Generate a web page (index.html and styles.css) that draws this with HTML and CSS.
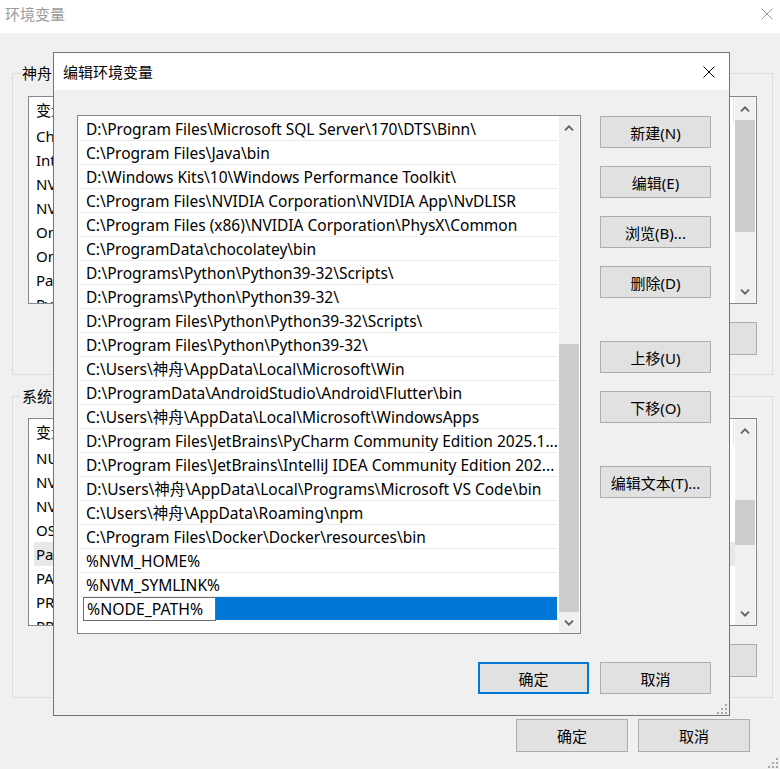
FILE: index.html
```html
<!DOCTYPE html>
<html lang="zh-CN">
<head>
<meta charset="utf-8">
<title>编辑环境变量</title>
<link rel="stylesheet" href="styles.css">
</head>
<body>
<div class="win">
  <div class="win-title">
    <span class="win-title-text">环境变量</span>
    <svg class="x-icon" width="12" height="12" viewBox="0 0 12 12"><path d="M0.5 0.5 L11.5 11.5 M11.5 0.5 L0.5 11.5" stroke="#9a9a9a" stroke-width="1" fill="none"/></svg>
  </div>
  <div class="win-body">
    <div class="group">
      <div class="group-label">神舟 的用户变量(U)</div>
      <div class="blv">
        <div class="blv-main">
          <div class="blv-head"><span>变量</span></div>
          <div class="blv-row">ChocolateyLastPathUpdate</div>
          <div class="blv-row">IntelliJ IDEA Community Edition</div>
          <div class="blv-row">NVM_HOME</div>
          <div class="blv-row">NVM_SYMLINK</div>
          <div class="blv-row">OneDrive</div>
          <div class="blv-row">OneDriveConsumer</div>
          <div class="blv-row">Path</div>
          <div class="blv-row">PyCharm Community Edition</div>
        </div>
        <div class="sb">
          <div class="sb-btn"><svg width="10" height="6" viewBox="0 0 10 6"><polyline points="1,5.3 5,1.3 9,5.3" fill="none" stroke="#606060" stroke-width="1.8"/></svg></div>
          <div class="sb-track"><div class="sb-thumb thumb-user"></div></div>
          <div class="sb-btn"><svg width="10" height="6" viewBox="0 0 10 6"><polyline points="1,0.7 5,4.7 9,0.7" fill="none" stroke="#606060" stroke-width="1.8"/></svg></div>
        </div>
      </div>
      <div class="grp-btns">
        <button class="btn">新建(N)...</button>
        <button class="btn">编辑(E)...</button>
        <button class="btn">删除(D)</button>
      </div>
    </div>

    <div class="group group-sys">
      <div class="group-label">系统变量(S)</div>
      <div class="blv blv-sys">
        <div class="blv-main">
          <div class="blv-head"><span>变量</span></div>
          <div class="blv-row">NUMBER_OF_PROCESSORS</div>
          <div class="blv-row">NVM_HOME</div>
          <div class="blv-row">NVM_SYMLINK</div>
          <div class="blv-row">OS</div>
          <div class="blv-row blv-sel">Path</div>
          <div class="blv-row">PATHEXT</div>
          <div class="blv-row">PROCESSOR_ARCHITECTURE</div>
          <div class="blv-row">PROCESSOR_IDENTIFIER</div>
        </div>
        <div class="sb">
          <div class="sb-btn"><svg width="10" height="6" viewBox="0 0 10 6"><polyline points="1,5.3 5,1.3 9,5.3" fill="none" stroke="#606060" stroke-width="1.8"/></svg></div>
          <div class="sb-track"><div class="sb-thumb thumb-sys"></div></div>
          <div class="sb-btn"><svg width="10" height="6" viewBox="0 0 10 6"><polyline points="1,0.7 5,4.7 9,0.7" fill="none" stroke="#606060" stroke-width="1.8"/></svg></div>
        </div>
      </div>
      <div class="grp-btns">
        <button class="btn">新建(W)...</button>
        <button class="btn">编辑(I)...</button>
        <button class="btn">删除(L)</button>
      </div>
    </div>

    <div class="win-foot">
      <button class="btn btn-foot">确定</button>
      <button class="btn btn-foot">取消</button>
    </div>
  </div>
  <svg class="grip grip-win" width="10" height="10" viewBox="0 0 10 10"><g fill="#a8a8a8"><rect x="8" y="0" width="2" height="2"/><rect x="4" y="4" width="2" height="2"/><rect x="8" y="4" width="2" height="2"/><rect x="0" y="8" width="2" height="2"/><rect x="4" y="8" width="2" height="2"/><rect x="8" y="8" width="2" height="2"/></g></svg>
</div>

<div class="dlg">
  <div class="dlg-title">
    <span>编辑环境变量</span>
    <svg class="x-icon" width="12" height="12" viewBox="0 0 12 12"><path d="M0.5 0.5 L11.5 11.5 M11.5 0.5 L0.5 11.5" stroke="#000" stroke-width="1" fill="none"/></svg>
  </div>
  <div class="dlg-body">
    <div class="lb">
      <div class="lb-rows">
        <div class="lb-row">D:\Program Files\Microsoft SQL Server\170\DTS\Binn\</div>
        <div class="lb-row">C:\Program Files\Java\bin</div>
        <div class="lb-row">D:\Windows Kits\10\Windows Performance Toolkit\</div>
        <div class="lb-row">C:\Program Files\NVIDIA Corporation\NVIDIA App\NvDLISR</div>
        <div class="lb-row">C:\Program Files (x86)\NVIDIA Corporation\PhysX\Common</div>
        <div class="lb-row">C:\ProgramData\chocolatey\bin</div>
        <div class="lb-row">D:\Programs\Python\Python39-32\Scripts\</div>
        <div class="lb-row">D:\Programs\Python\Python39-32\</div>
        <div class="lb-row">D:\Program Files\Python\Python39-32\Scripts\</div>
        <div class="lb-row">D:\Program Files\Python\Python39-32\</div>
        <div class="lb-row">C:\Users\神舟\AppData\Local\Microsoft\Win</div>
        <div class="lb-row">D:\ProgramData\AndroidStudio\Android\Flutter\bin</div>
        <div class="lb-row">C:\Users\神舟\AppData\Local\Microsoft\WindowsApps</div>
        <div class="lb-row">D:\Program Files\JetBrains\PyCharm Community Edition 2025.1...</div>
        <div class="lb-row">D:\Program Files\JetBrains\IntelliJ IDEA Community Edition 202...</div>
        <div class="lb-row">D:\Users\神舟\AppData\Local\Programs\Microsoft VS Code\bin</div>
        <div class="lb-row">C:\Users\神舟\AppData\Roaming\npm</div>
        <div class="lb-row">C:\Program Files\Docker\Docker\resources\bin</div>
        <div class="lb-row">%NVM_HOME%</div>
        <div class="lb-row">%NVM_SYMLINK%</div>
        <div class="lb-row lb-edit">
          <div class="edit-box">%NODE_PATH%</div>
          <div class="edit-fill"></div>
        </div>
      </div>
      <div class="sb sb-dlg">
        <div class="sb-btn sb-up"><svg width="10" height="6" viewBox="0 0 10 6"><polyline points="1,5.3 5,1.3 9,5.3" fill="none" stroke="#606060" stroke-width="1.8"/></svg></div>
        <div class="sb-track sb-track-end"><div class="sb-thumb thumb-dlg"></div></div>
        <div class="sb-btn sb-down"><svg width="10" height="6" viewBox="0 0 10 6"><polyline points="1,0.7 5,4.7 9,0.7" fill="none" stroke="#606060" stroke-width="1.8"/></svg></div>
      </div>
    </div>
    <div class="side-btns">
      <button class="btn">新建(N)</button>
      <button class="btn">编辑(E)</button>
      <button class="btn">浏览(B)...</button>
      <button class="btn">删除(D)</button>
      <button class="btn btn-sep">上移(U)</button>
      <button class="btn">下移(O)</button>
      <button class="btn btn-sep">编辑文本(T)...</button>
    </div>
    <div class="dlg-foot">
      <button class="btn btn-dlgfoot btn-default">确定</button>
      <button class="btn btn-dlgfoot">取消</button>
    </div>
  </div>
  <svg class="grip grip-dlg" width="10" height="10" viewBox="0 0 10 10"><g fill="#a8a8a8"><rect x="8" y="0" width="2" height="2"/><rect x="4" y="4" width="2" height="2"/><rect x="8" y="4" width="2" height="2"/><rect x="0" y="8" width="2" height="2"/><rect x="4" y="8" width="2" height="2"/><rect x="8" y="8" width="2" height="2"/></g></svg>
</div>
</body>
</html>
```

FILE: styles.css
```css
html, body {
  margin: 0;
  padding: 0;
}
body {
  width: 780px;
  height: 769px;
  overflow: hidden;
  position: relative;
  background: #f0f0f0;
  font-family: "Noto Sans", "Noto Sans CJK SC", sans-serif;
  font-size: 15px;
  color: #000;
}
.win {
  width: 780px;
  height: 769px;
  position: relative;
}
.win-title {
  height: 33px;
  box-sizing: border-box;
  background: #fff;
  display: flex;
  align-items: center;
  justify-content: space-between;
  padding: 0 7px 5px 5px;
  color: #9a9a9a;
}
.win-title-text {
  line-height: 20px;
}
.x-icon {
  display: block;
}
.win-body {
  padding: 40px 0 0 12px;
}
.group {
  width: 761px;
  box-sizing: border-box;
  border: 1px solid #dcdcdc;
  padding: 22px 15px 19px 15px;
  position: relative;
}
.group-sys {
  margin-top: 21px;
  padding-top: 21px;
  padding-bottom: 20px;
}
.group-label {
  position: absolute;
  left: 8px;
  top: -11px;
  background: #f0f0f0;
  padding: 0 1px;
  line-height: 20px;
  white-space: nowrap;
}
.blv {
  width: 729px;
  height: 208px;
  box-sizing: border-box;
  border: 1px solid #828790;
  background: #fff;
  display: flex;
}
.blv-main {
  flex: 1;
  overflow: hidden;
}
.blv-head {
  height: 27px;
  line-height: 27px;
  padding-left: 7px;
  border-right: 1px solid #e5e5e5;
  margin-right: 1px;
}
.blv-row {
  height: 24px;
  line-height: 24px;
  padding-left: 7px;
  white-space: nowrap;
}
.blv-sel {
  background: #e8e8e8;
  margin-left: 5px;
  padding-left: 2px;
}
.sb {
  width: 20px;
  margin-right: 1px;
  background: #f0f0f0;
  display: flex;
  flex-direction: column;
}
.sb-btn {
  height: 23px;
  flex: none;
  display: flex;
  align-items: center;
  justify-content: center;
}
.sb-btn svg {
  display: block;
}
.sb-track {
  flex: 1;
  display: flex;
  flex-direction: column;
}
.sb-track-end {
  justify-content: flex-end;
}
.sb-thumb {
  background: #cdcdcd;
}
.thumb-user {
  height: 112px;
}
.thumb-sys {
  height: 45px;
  margin-top: 58px;
}
.grp-btns {
  display: flex;
  justify-content: flex-end;
  gap: 10px;
  margin-top: 18px;
}
.btn {
  font: inherit;
  color: #000;
  background: #e1e1e1;
  border: 1px solid #adadad;
  border-radius: 0;
  box-sizing: border-box;
  width: 111px;
  height: 33px;
  padding: 0;
  margin: 0;
  text-align: center;
}
.win-foot {
  width: 738px;
  display: flex;
  justify-content: flex-end;
  gap: 10px;
  margin-top: 21px;
}
.btn-foot {
  width: 112px;
}
.grip {
  position: absolute;
  display: block;
}
.grip-win {
  right: 2px;
  bottom: 1px;
}

/* dialog */
.dlg {
  position: absolute;
  left: 53px;
  top: 52px;
  width: 677px;
  height: 664px;
  box-sizing: border-box;
  border: 1px solid #747474;
  background: #f0f0f0;
}
.dlg-title {
  height: 37px;
  background: #fff;
  display: flex;
  align-items: center;
  justify-content: space-between;
  padding: 0 14px 0 9px;
}
.dlg-body {
  padding: 25px 0 0 23px;
  display: grid;
  grid-template-columns: 504px 111px;
  column-gap: 19px;
}
.lb {
  width: 504px;
  height: 519px;
  box-sizing: border-box;
  border: 1px solid #828790;
  background: #fff;
  display: flex;
}
.lb-rows {
  flex: 1;
  padding: 1px 2px 0 2px;
  overflow: hidden;
}
.lb-row {
  height: 24px;
  box-sizing: border-box;
  border-bottom: 1px solid #ebebeb;
  font-size: 15.5px;
  line-height: 25px;
  padding-left: 6px;
  white-space: nowrap;
  overflow: hidden;
}
.lb-edit {
  display: flex;
  padding-left: 3px;
  border-bottom: none;
}
.edit-box {
  width: 133px;
  height: 24px;
  box-sizing: border-box;
  border: 1px solid #6d6d6d;
  background: #fff;
  font-size: 15.8px;
  line-height: 23px;
  padding-left: 3px;
  flex: none;
}
.edit-fill {
  flex: 1;
  height: 23px;
  background: #0078d7;
}
.sb-dlg .sb-up {
  height: 23px;
}
.sb-dlg .sb-down {
  height: 21px;
}
.thumb-dlg {
  height: 268px;
}
.side-btns {
  display: flex;
  flex-direction: column;
  padding-top: 1px;
}
.side-btns .btn {
  height: 32px;
  margin-top: 18px;
}
.side-btns .btn:first-child {
  margin-top: 0;
}
.side-btns .btn-sep {
  margin-top: 43px;
}
.dlg-foot {
  grid-column: 1 / -1;
  display: flex;
  justify-content: flex-end;
  gap: 11px;
  margin-top: 28px;
}
.btn-dlgfoot {
  height: 32px;
}
.btn-default {
  border: 2px solid #0078d7;
}
.grip-dlg {
  right: 2px;
  bottom: 1px;
}
```
